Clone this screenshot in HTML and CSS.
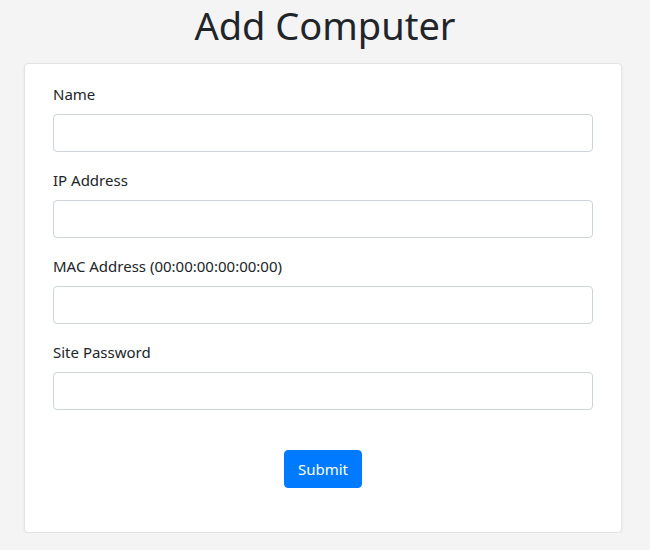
FILE: index.html
```html
<!DOCTYPE html>
<html lang="en">
<head>
<meta charset="utf-8">
<title>Add Computer</title>
<link rel="stylesheet" href="styles.css">
</head>
<body>
<h1 class="title">Add Computer</h1>
<div class="card">
  <form class="form">
    <div class="group">
      <label class="label" for="name">Name</label>
      <input class="input" id="name" type="text">
    </div>
    <div class="group">
      <label class="label" for="ip">IP Address</label>
      <input class="input" id="ip" type="text">
    </div>
    <div class="group">
      <label class="label" for="mac">MAC Address (00:00:00:00:00:00)</label>
      <input class="input" id="mac" type="text">
    </div>
    <div class="group">
      <label class="label" for="pw">Site Password</label>
      <input class="input" id="pw" type="password">
    </div>
    <div class="actions">
      <button class="btn" type="button">Submit</button>
    </div>
  </form>
</div>
</body>
</html>
```
FILE: styles.css
```css
* { box-sizing: border-box; }
body {
  margin: 0;
  background: #f4f4f4;
  font-family: "Noto Sans", "Open Sans", sans-serif;
  color: #212529;
  font-size: 16px;
  line-height: 1.5;
}
.title {
  margin: 0 0 13px;
  text-align: center;
  font-weight: 400;
  font-size: 38px;
  line-height: 50px;
}
.card {
  margin: 0 28px 0 24px;
  background: #fff;
  border: 1px solid #e3e3e3;
  border-radius: 4px;
  box-shadow: 0 1px 3px rgba(0,0,0,0.06);
  padding: 18px 28px 44px;
}
.group {
  display: flex;
  flex-direction: column;
  margin-bottom: 16px;
}
.label {
  margin-bottom: 8px;
  font-size: 15px;
  line-height: 24px;
}
.input {
  height: 38px;
  border: 1px solid #ced4da;
  border-radius: 4px;
  background: #fff;
  font: inherit;
  padding: 6px 12px;
}
.actions {
  display: flex;
  justify-content: center;
  padding-top: 24px;
}
.btn {
  height: 38px;
  padding: 0 13px;
  border: 1px solid #007bff;
  background: #007bff;
  color: #fff;
  border-radius: 4px;
  font: inherit;
  font-size: 15px;
}
```
